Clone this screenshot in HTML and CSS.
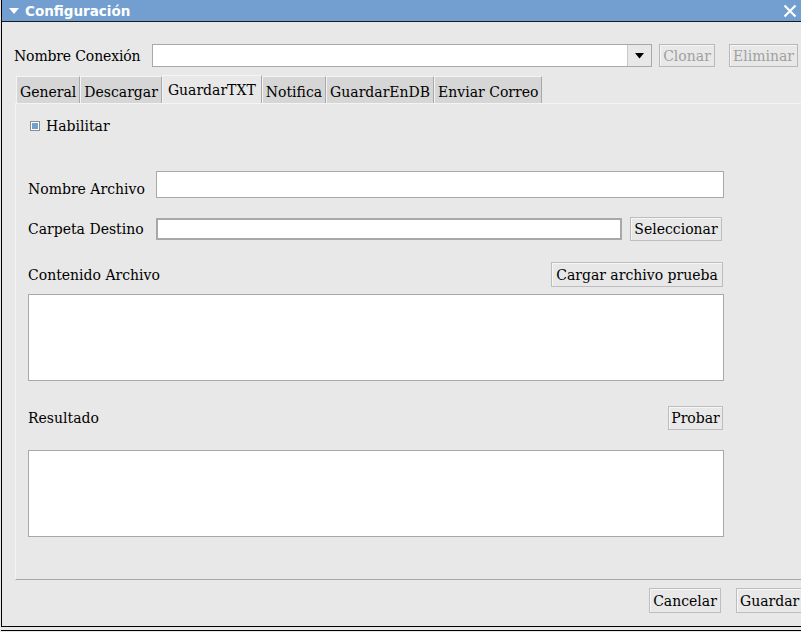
FILE: index.html
```html
<!DOCTYPE html>
<html>
<head>
<meta charset="utf-8">
<link rel="stylesheet" href="styles.css">
</head>
<body>
<div class="win">
  <div class="titlebar">
    <svg class="tarrow" width="12" height="8" viewBox="0 0 12 8"><polygon points="1,1 11,1 6,7" fill="#fff"/></svg>
    <span class="title">Configuración</span>
    <svg class="close" width="14" height="14" viewBox="0 0 14 14"><path d="M1.5 1.5 L12.5 12.5 M12.5 1.5 L1.5 12.5" stroke="#fff" stroke-width="2.2"/></svg>
  </div>
  <div class="body">
    <div class="conn-row">
      <span class="conn-label">Nombre Conexión</span>
      <div class="combo">
        <div class="combo-input"></div>
        <div class="combo-btn"><svg width="9" height="6" viewBox="0 0 9 6"><polygon points="0,0 9,0 4.5,5.5" fill="#000"/></svg></div>
      </div>
      <button class="btn disabled clonar">Clonar</button>
      <button class="btn disabled eliminar">Eliminar</button>
    </div>
    <div class="tabs">
      <div class="tab">General</div>
      <div class="tab">Descargar</div>
      <div class="tab active">GuardarTXT</div>
      <div class="tab">Notifica</div>
      <div class="tab">GuardarEnDB</div>
      <div class="tab">Enviar Correo</div>
    </div>
    <div class="panel">
      <div class="check-row">
        <span class="checkbox"><span class="checkmark"></span></span>
        <span>Habilitar</span>
      </div>
      <div class="field-row r-nombre">
        <span class="flabel">Nombre Archivo</span>
        <div class="input big"></div>
      </div>
      <div class="field-row r-carpeta">
        <span class="flabel">Carpeta Destino</span>
        <div class="input thick"></div>
        <button class="btn sel">Seleccionar</button>
      </div>
      <div class="head-row r-contenido">
        <span>Contenido Archivo</span>
        <button class="btn">Cargar archivo prueba</button>
      </div>
      <div class="textarea"></div>
      <div class="head-row r-resultado">
        <span>Resultado</span>
        <button class="btn">Probar</button>
      </div>
      <div class="textarea"></div>
    </div>
    <div class="footer">
      <button class="btn cancel">Cancelar</button>
      <button class="btn save">Guardar</button>
    </div>
  </div>
</div>
<div class="under"></div>
</body>
</html>
```
FILE: styles.css
```css
html, body {
  margin: 0;
  padding: 0;
}
body {
  width: 801px;
  height: 632px;
  overflow: hidden;
  background: #e8e8e8;
  font-family: "DejaVu Serif", serif;
  font-size: 14px;
  color: #000;
}
.win {
  margin-left: 1px;
  width: 830px;
  height: 626px;
  border-left: 1px solid #000;
  border-bottom: 1px solid #000;
  background: #e8e8e8;
  display: flex;
  flex-direction: column;
}
.titlebar {
  background: #729fcf;
  border-bottom: 1px solid #1a1a1a;
  display: flex;
  align-items: center;
  box-sizing: border-box;
  height: 22px;
  position: relative;
}
.tarrow {
  margin-left: 6px;
  margin-top: 1px;
}
.title {
  margin-left: 5px;
  color: #fff;
  font-family: "DejaVu Sans", sans-serif;
  font-weight: bold;
  font-size: 13.5px;
}
.close {
  position: absolute;
  left: 781px;
  top: 4px;
}
.body {
  flex: 1;
  display: flex;
  flex-direction: column;
}
.conn-row {
  display: flex;
  align-items: center;
  margin-top: 22px;
  padding-left: 12px;
  height: 23px;
}
.conn-label {
  width: 138px;
  letter-spacing: -0.15px;
}
.combo {
  display: flex;
  width: 500px;
  height: 23px;
  box-sizing: border-box;
  border: 1px solid #a8a8a8;
  background: #fff;
}
.combo-input {
  flex: 1;
}
.combo-btn {
  width: 23px;
  background: #e8e8e8;
  border-left: 1px solid #c8c8c8;
  display: flex;
  align-items: center;
  justify-content: center;
}
.btn {
  font-family: "DejaVu Serif", serif;
  font-size: 14px;
  color: #000;
  background: #e8e8e8;
  border: 1px solid #bdbdbd;
  box-shadow: inset 1px 1px 0 #f6f6f6;
  padding: 0 2px;
  height: 25px;
  margin: 0;
  box-sizing: border-box;
  white-space: nowrap;
}
.btn.disabled {
  color: #a0a0a0;
  border-color: #b8b8b8;
  height: 23px;
}
.clonar {
  margin-left: 7px;
  width: 56px;
}
.eliminar {
  margin-left: 14px;
  width: 69px;
}
.tabs {
  display: flex;
  align-items: flex-end;
  margin-top: 8px;
  margin-left: 14px;
  height: 29px;
}
.tab {
  height: 27px;
  box-sizing: border-box;
  background: #d6d6d6;
  border-top: 1px solid #f4f4f4;
  border-left: 1px solid #f4f4f4;
  border-right: 1px solid #a8a8a8;
  padding: 6px 3px 0 3px;
  margin-bottom: 1px;
  line-height: 18px;
  white-space: nowrap;
}
.tab.active {
  background: #e8e8e8;
  height: 29px;
  margin-bottom: 0;
  padding-top: 5px;
  padding-left: 5px;
  padding-right: 5px;
}
.panel {
  margin-left: 13px;
  height: 477px;
  border-top: 1px solid #f4f4f4;
  border-left: 1px solid #f4f4f4;
  border-bottom: 1px solid #a8a8a8;
  box-sizing: border-box;
  padding-left: 12px;
  display: flex;
  flex-direction: column;
  margin-top: -1px;
}
.check-row {
  display: flex;
  align-items: center;
  margin-top: 12px;
  height: 20px;
  padding-left: 2px;
}
.checkbox {
  width: 10px;
  height: 10px;
  box-sizing: border-box;
  border: 1px solid #8c8c8c;
  background: #fff;
  display: flex;
  align-items: center;
  justify-content: center;
  margin-right: 6px;
}
.checkmark {
  width: 6px;
  height: 6px;
  background: #729fcf;
}
.field-row {
  display: flex;
  align-items: center;
}
.flabel {
  width: 128px;
}
.r-nombre {
  margin-top: 35px;
  height: 27px;
}
.r-nombre .flabel {
  margin-top: 8px;
}
.input {
  background: #fff;
  box-sizing: border-box;
}
.input.big {
  width: 568px;
  height: 27px;
  border: 1px solid #a8a8a8;
}
.r-carpeta {
  margin-top: 19px;
  height: 24px;
}
.input.thick {
  width: 466px;
  height: 22px;
  border: 2px solid #a8a8a8;
}
.sel {
  margin-left: 8px;
  width: 92px;
  height: 24px;
}
.head-row {
  display: flex;
  align-items: center;
  justify-content: space-between;
  width: 695px;
}
.r-contenido {
  margin-top: 21px;
  height: 25px;
}
.r-contenido .btn {
  width: 172px;
}
.textarea {
  margin-top: 7px;
  width: 696px;
  height: 87px;
  box-sizing: border-box;
  background: #fff;
  border: 1px solid #a8a8a8;
}
.r-resultado {
  margin-top: 25px;
  height: 24px;
}
.r-resultado .btn {
  width: 55px;
  height: 24px;
}
.r-resultado + .textarea {
  margin-top: 20px;
}
.footer {
  display: flex;
  margin-top: 8px;
  padding-left: 647px;
}
.cancel {
  width: 72px;
}
.save {
  margin-left: 15px;
  width: 72px;
  text-align: left;
  padding-left: 3px;
}
.under {
  margin-left: 1px;
  margin-top: 3px;
  width: 830px;
  border-top: 1px solid #000;
}
```
